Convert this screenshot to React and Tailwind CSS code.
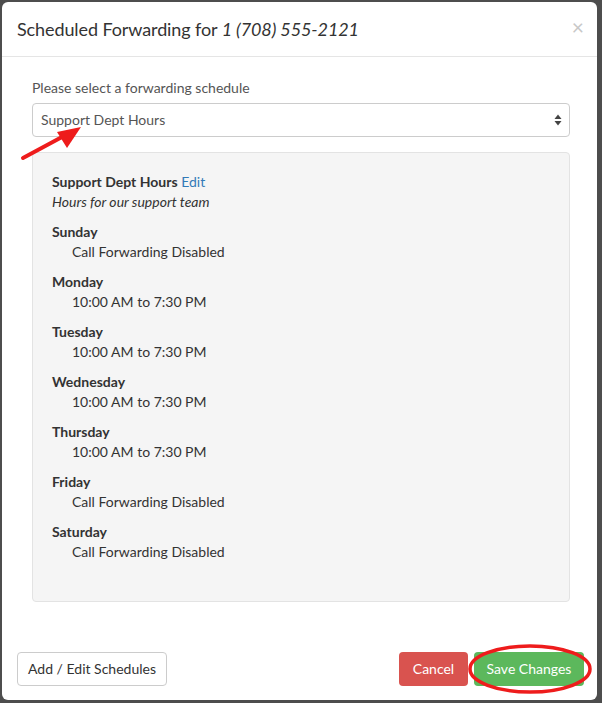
import React from "react";

const days = [
  ["Sunday", "Call Forwarding Disabled"],
  ["Monday", "10:00 AM to 7:30 PM"],
  ["Tuesday", "10:00 AM to 7:30 PM"],
  ["Wednesday", "10:00 AM to 7:30 PM"],
  ["Thursday", "10:00 AM to 7:30 PM"],
  ["Friday", "Call Forwarding Disabled"],
  ["Saturday", "Call Forwarding Disabled"],
];

function SelectCaret() {
  return (
    <svg width="8" height="12" viewBox="0 0 8 12" className="text-[#444]">
      <path d="M4 0.5 L7.5 5 H0.5 Z" fill="currentColor" />
      <path d="M4 11.5 L7.5 7 H0.5 Z" fill="currentColor" />
    </svg>
  );
}

export default function App() {
  return (
    <div
      className="relative w-[602px] h-[703px] bg-[#4d4d4d] pt-[2px] pl-[2px] pr-[5px] pb-[3px] text-[14px] leading-[20px] text-[#333]"
      style={{ fontFamily: "Lato, 'Open Sans', sans-serif" }}
    >
      <div className="h-full bg-white rounded-[6px] flex flex-col">
        {/* header */}
        <div className="h-[55px] shrink-0 flex items-center justify-between pl-[15px] pr-[13px] border-b border-[#e5e5e5]">
          <h4 className="text-[18px] leading-[26px] text-[#333] tracking-[-0.1px]">
            Scheduled Forwarding for <i>1 (708) 555-2121</i>
          </h4>
          <span className="text-[21px] leading-none text-[#c8c8c8] -mt-[5px]">×</span>
        </div>

        {/* body */}
        <div className="flex-1 pt-[21px] pl-[30px] pr-[27px]">
          <label className="block text-[#555] mb-[5px]">Please select a forwarding schedule</label>
          <div className="h-[34px] border border-[#ccc] rounded-[4px] flex items-center justify-between pl-[8px] pr-[7px] text-[#555]">
            <span>Support Dept Hours</span>
            <SelectCaret />
          </div>

          <div className="mt-[15px] h-[450px] bg-[#f5f5f5] border border-[#e3e3e3] rounded-[4px] p-[19px]">
            <div>
              <b className="font-bold">Support Dept Hours</b>{" "}
              <span className="text-[#337ab7]">Edit</span>
            </div>
            <div className="italic">Hours for our support team</div>
            {days.map(([d, t]) => (
              <div key={d} className="mt-[10px]">
                <div className="font-bold">{d}</div>
                <div className="pl-[20px]">{t}</div>
              </div>
            ))}
          </div>
        </div>

        {/* footer */}
        <div className="shrink-0 flex items-center justify-between pl-[15px] pr-[13px] pb-[14px]">
          <button className="h-[34px] px-[10px] border border-[#ccc] rounded-[4px] bg-white text-[#333]">
            Add / Edit Schedules
          </button>
          <div className="flex gap-[6px]">
            <button className="h-[34px] w-[69px] rounded-[4px] bg-[#d9534f] text-white">Cancel</button>
            <button className="h-[34px] w-[110px] rounded-[4px] bg-[#5cb85c] text-white">Save Changes</button>
          </div>
        </div>
      </div>

      {/* annotations */}
      <svg className="absolute left-0 top-0 pointer-events-none" width="602" height="703">
        <line x1="23" y1="158" x2="62" y2="137" stroke="#ee1c1c" strokeWidth="4" strokeLinecap="round" />
        <path d="M81 127 L57 132 L67 148 Z" fill="#ee1c1c" />
        <ellipse cx="530" cy="669" rx="60" ry="23" fill="none" stroke="#ee1c1c" strokeWidth="3.5" />
      </svg>
    </div>
  );
}
